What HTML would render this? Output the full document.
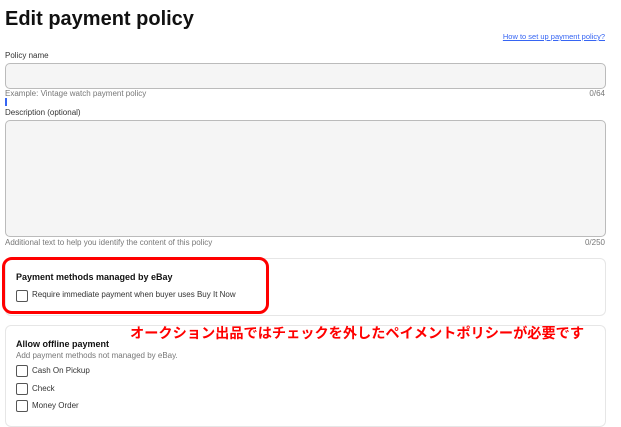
<!DOCTYPE html>
<html><head><meta charset="utf-8"><style>
body{margin:0;width:621px;height:417px;overflow:hidden;background:#fff;font-family:"Liberation Sans","DejaVu Sans",sans-serif;color:#111;position:relative}
.a{position:absolute;white-space:nowrap}
.s{font-size:8px;color:#333}
.g{font-size:8px;color:#777}
.box{position:absolute;left:5px;width:599px;background:#f5f5f5;border:1px solid #bbb;border-radius:5px}
.card{position:absolute;left:5px;width:599px;border:1px solid #e6e6e6;border-radius:6px}
.cb{position:absolute;width:10px;height:10px;border:1px solid #555;border-radius:2px}
</style></head><body>
<div class="a" style="left:5px;top:8px;font-size:20px;font-weight:bold">Edit payment policy</div>
<div class="a" style="right:16px;top:32px;font-size:7.5px;color:#3665f3;text-decoration:underline">How to set up payment policy?</div>
<div class="a s" style="left:5px;top:51px">Policy name</div>
<div class="box" style="top:63px;height:24px"></div>
<div class="a g" style="left:5px;top:89px">Example: Vintage watch payment policy</div>
<div class="a g" style="right:16px;top:89px">0/64</div>
<div class="a" style="left:5px;top:98px;width:1.5px;height:8px;background:#3665f3"></div>
<div class="a s" style="left:5px;top:108px">Description (optional)</div>
<div class="box" style="top:120px;height:115px"></div>
<div class="a g" style="left:5px;top:238px">Additional text to help you identify the content of this policy</div>
<div class="a g" style="right:16px;top:238px">0/250</div>
<div class="card" style="top:258px;height:56px"></div>
<div class="a" style="left:16px;top:272px;font-size:9px;font-weight:bold">Payment methods managed by eBay</div>
<div class="cb" style="left:16px;top:290px"></div>
<div class="a s" style="left:32px;top:290px">Require immediate payment when buyer uses Buy It Now</div>
<div class="a" style="left:2px;top:257px;width:261px;height:51px;border:3px solid #f00;border-radius:10px"></div>
<div class="card" style="top:325px;height:100px"></div>
<div class="a" style="left:130px;top:323px;font-size:14.2px;font-weight:bold;color:#f00;font-family:'Liberation Sans','Noto Sans CJK JP',sans-serif">オークション出品ではチェックを外したペイメントポリシーが必要です</div>
<div class="a" style="left:16px;top:339px;font-size:9px;font-weight:bold">Allow offline payment</div>
<div class="a g" style="left:16px;top:351px">Add payment methods not managed by eBay.</div>
<div class="cb" style="left:16px;top:365px"></div><div class="a s" style="left:32px;top:366px">Cash On Pickup</div>
<div class="cb" style="left:16px;top:383px"></div><div class="a s" style="left:32px;top:384px">Check</div>
<div class="cb" style="left:16px;top:400px"></div><div class="a s" style="left:32px;top:401px">Money Order</div>
</body></html>
